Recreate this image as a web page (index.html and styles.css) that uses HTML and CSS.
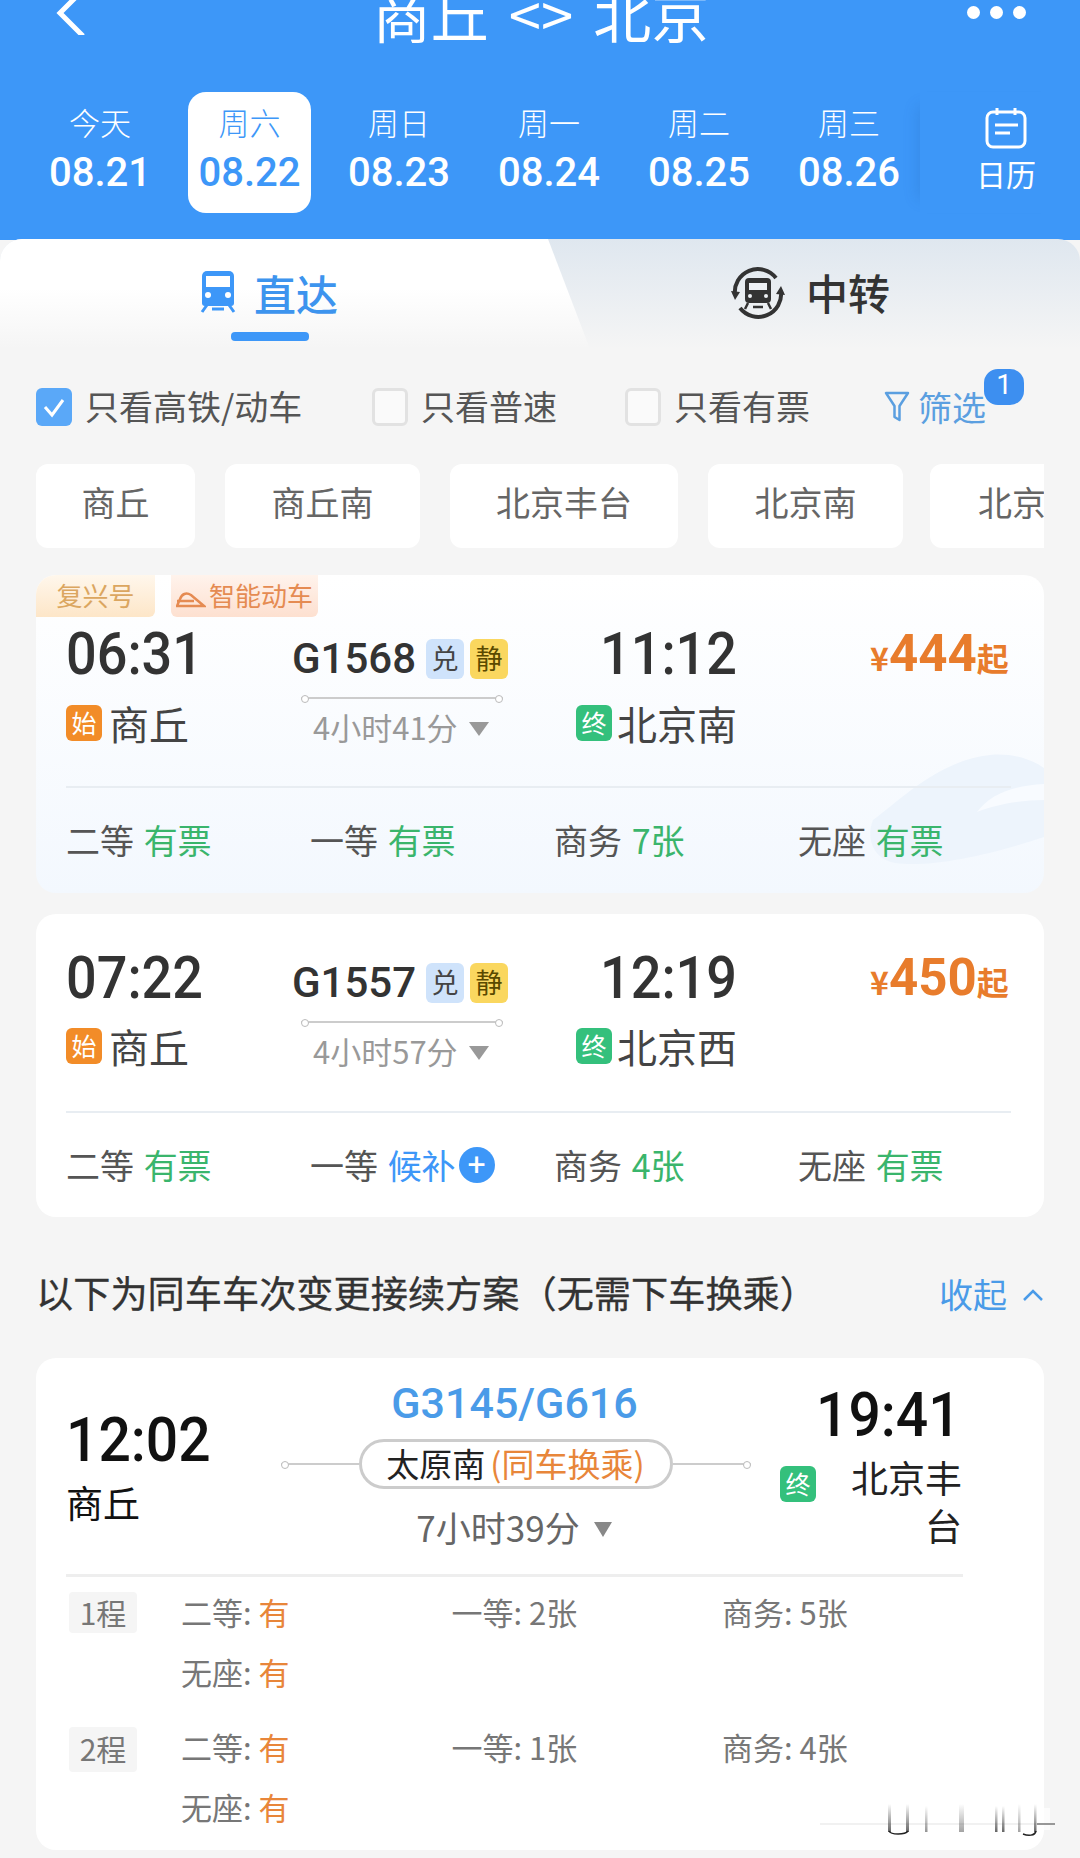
FILE: index.html
```html
<!DOCTYPE html>
<html lang="zh">
<head>
<meta charset="utf-8">
<title>商丘 北京</title>
<link rel="stylesheet" href="styles.css">
</head>
<body>
<header class="head">
  <div class="nav">
    <svg class="back" viewBox="0 0 40 35"><path d="M25-2 10 13l23 23" fill="none" stroke="#fff" stroke-width="5"/></svg>
    <div class="route">商丘 &lt;&gt; 北京</div>
    <div class="more"><i></i><i></i><i></i></div>
  </div>
  <div class="dates">
    <div class="date"><span class="d1">今天</span><span class="d2">08.21</span></div>
    <div class="date on"><span class="d1">周六</span><span class="d2">08.22</span></div>
    <div class="date"><span class="d1">周日</span><span class="d2">08.23</span></div>
    <div class="date"><span class="d1">周一</span><span class="d2">08.24</span></div>
    <div class="date"><span class="d1">周二</span><span class="d2">08.25</span></div>
    <div class="date"><span class="d1">周三</span><span class="d2">08.26</span></div>
    <div class="cal">
      <svg class="cal-i" viewBox="0 0 42 42"><rect x="2" y="5" width="38" height="35" rx="6" fill="none" stroke="#fff" stroke-width="3"/><path d="M12 1v7M30 1v7" stroke="#fff" stroke-width="3"/><path d="M10 18h23M10 26h15" stroke="#fff" stroke-width="3"/></svg>
      <span>日历</span>
    </div>
  </div>
</header>
<main class="body">
  <div class="tabs">
    <div class="tab tab-l">
      <svg class="t-ico" viewBox="0 0 36 42"><path d="M7 0h22a5 5 0 0 1 5 5v27a3 3 0 0 1-3 3H5a3 3 0 0 1-3-3V5a5 5 0 0 1 5-5z" fill="#3d97f8"/><rect x="6" y="5" width="24" height="11" fill="#fff"/><circle cx="8" cy="24" r="3" fill="#fff"/><circle cx="28" cy="24" r="3" fill="#fff"/><path d="M7 34 2 41M29 34l5 7M12 38h12" stroke="#3d97f8" stroke-width="3" fill="none"/></svg>
      <span class="tl">直达</span>
      <i class="bar"></i>
    </div>
    <div class="tab tab-r">
      <svg class="t-ico2" viewBox="0 0 56 56"><path d="M5 30A23 23 0 0 1 46 13M51 26A23 23 0 0 1 10 43" fill="none" stroke="#333" stroke-width="4"/><path d="M1 26l9 1-5 8zM55 30l-9-1 5-8z" fill="#333"/><rect x="15" y="13" width="26" height="25" rx="4" fill="#333"/><rect x="19" y="18" width="18" height="7" fill="#eef1f5"/><circle cx="20" cy="31" r="2" fill="#eef1f5"/><circle cx="36" cy="31" r="2" fill="#eef1f5"/><path d="M18 38l-3 6M38 38l3 6M23 42h10" stroke="#333" stroke-width="2.500"/></svg>
      <span class="tr">中转</span>
    </div>
  </div>

  <div class="filters">
    <div class="chk on"><svg viewBox="0 0 35 37"><path d="M9 19l7 8 11-15" fill="none" stroke="#fff" stroke-width="3"/></svg></div>
    <span class="flab w1">只看高铁/动车</span>
    <div class="chk"></div>
    <span class="flab w2">只看普速</span>
    <div class="chk"></div>
    <span class="flab w3">只看有票</span>
    <div class="screen">
      <svg viewBox="0 0 26 32"><path d="M2 3h22L15.500 16v14l-5-3V16z" fill="none" stroke="#5b9fe0" stroke-width="2.500" stroke-linejoin="round"/></svg>
      <span>筛选</span>
      <b class="badge">1</b>
    </div>
  </div>

  <div class="chips">
    <div class="chip c1">商丘</div>
    <div class="chip c2">商丘南</div>
    <div class="chip c3">北京丰台</div>
    <div class="chip c4">北京南</div>
    <div class="chip c5">北京</div>
  </div>

  <section class="card first">
    <svg class="wm" viewBox="0 0 174 120"><path d="M3 70C30 50 70 10 120 5c20-2 40 3 54 13v69c-54 18-114 31-149 26C5 110-5 90 3 70z" fill="#edf4fc"/><path d="M107 62c13-17 33-26 67-28v16c-24 0-49 5-67 12z" fill="#f8fbff"/></svg>
    <div class="tags">
      <span class="tag fx">复兴号</span>
      <span class="tag zn"><svg viewBox="0 0 30 18"><path d="M1 16h27L15 5C10 2 6 4 4 9z M1 11h17" fill="none" stroke="#e58b52" stroke-width="2.500"/></svg>智能动车</span>
    </div>
    <div class="info first-info">
      <div class="time">06:31</div>
      <div class="code"><span class="no">G1568</span><em class="ex">兑</em><em class="qu">静</em></div>
      <div class="time t2">11:12</div>
      <div class="price"><small>¥</small>444<small>起</small></div>
    </div>
    <div class="info2">
      <div class="st"><b class="shi">始</b><span>商丘</span></div>
      <div class="mid"><div class="lin"></div><div class="dur">4小时41分<i class="tri"></i></div></div>
      <div class="st st2"><b class="zhong">终</b><span>北京南</span></div>
    </div>
    <div class="rule"></div>
    <div class="seats">
      <div class="seat">二等 <span class="g">有票</span></div>
      <div class="seat">一等 <span class="g">有票</span></div>
      <div class="seat">商务 <span class="g">7张</span></div>
      <div class="seat">无座 <span class="g">有票</span></div>
    </div>
  </section>

  <section class="card second">
    <div class="info">
      <div class="time">07:22</div>
      <div class="code"><span class="no">G1557</span><em class="ex">兑</em><em class="qu">静</em></div>
      <div class="time t2">12:19</div>
      <div class="price"><small>¥</small>450<small>起</small></div>
    </div>
    <div class="info2">
      <div class="st"><b class="shi">始</b><span>商丘</span></div>
      <div class="mid"><div class="lin"></div><div class="dur">4小时57分<i class="tri"></i></div></div>
      <div class="st st2"><b class="zhong">终</b><span>北京西</span></div>
    </div>
    <div class="rule"></div>
    <div class="seats">
      <div class="seat">二等 <span class="g">有票</span></div>
      <div class="seat">一等 <span class="b">候补</span><b class="plus">+</b></div>
      <div class="seat">商务 <span class="g">4张</span></div>
      <div class="seat">无座 <span class="g">有票</span></div>
    </div>
  </section>

  <div class="sec">
    <h2>以下为同车车次变更接续方案（无需下车换乘）</h2>
    <div class="fold">收起<svg viewBox="0 0 22 14"><path d="M2 12 11 3l9 9" fill="none" stroke="#4a9be8" stroke-width="2.500"/></svg></div>
  </div>

  <section class="card third">
    <div class="plan">
      <div class="p-l"><div class="p-time">12:02</div><div class="p-st">商丘</div></div>
      <div class="p-m">
        <div class="p-no">G3145/G616</div>
        <div class="p-via"><i class="p-line"></i><div class="pill">太原南<span class="o">(同车换乘)</span></div><i class="p-line"></i></div>
        <div class="p-dur">7小时39分<i class="tri"></i></div>
      </div>
      <div class="p-r">
        <div class="p-time">19:41</div>
        <div class="p-end"><b class="zhong">终</b><span>北京丰台</span></div>
      </div>
    </div>
    <div class="p-rule"></div>
    <div class="leg">
      <span class="lt">1程</span>
      <div class="grid">
        <div>二等: <span class="o">有</span></div><div>一等: 2张</div><div>商务: 5张</div>
        <div>无座: <span class="o">有</span></div>
      </div>
    </div>
    <div class="leg leg2">
      <span class="lt">2程</span>
      <div class="grid">
        <div>二等: <span class="o">有</span></div><div>一等: 1张</div><div>商务: 4张</div>
        <div>无座: <span class="o">有</span></div>
      </div>
    </div>
  </section>
</main>
<svg class="smear" viewBox="0 0 245 50">
  <defs><linearGradient id="fade" x1="0" y1="0" x2="0" y2="1"><stop offset="0" stop-color="#333" stop-opacity="0"/><stop offset="1" stop-color="#333" stop-opacity=".75"/></linearGradient></defs>
  <rect x="5" y="8" width="230" height="22" fill="#fff" opacity=".7"/>
  <path d="M5 24h220" stroke="#ddd" stroke-width="1.500" opacity=".5"/>
  <path d="M222 24h18" stroke="#777" stroke-width="1.500"/>
  <rect x="73" y="4" width="3" height="28" fill="url(#fade)"/><rect x="91" y="4" width="3" height="28" fill="url(#fade)"/>
  <path d="M74 31c2 4 16 4 19 0" fill="none" stroke="#222" stroke-width="1.500"/>
  <rect x="110" y="6" width="2.500" height="26" fill="url(#fade)" opacity=".7"/>
  <rect x="144" y="4" width="5" height="28" fill="url(#fade)" opacity=".6"/>
  <rect x="180" y="6" width="2.500" height="26" fill="url(#fade)"/><rect x="187" y="6" width="2.500" height="26" fill="url(#fade)"/>
  <rect x="203" y="4" width="2.500" height="28" fill="url(#fade)" opacity=".6"/><rect x="219" y="4" width="2.500" height="28" fill="url(#fade)"/>
  <path d="M208 34c5 2 12 2 13-3" fill="none" stroke="#222" stroke-width="1.500"/>
</svg>
</body>
</html>
```
FILE: styles.css
```css
* { box-sizing: border-box; }
html, body { margin: 0; padding: 0; }
body {
  width: 1080px; height: 1858px; overflow: hidden; background: #f5f5f5; position: relative;
  font-family: "Noto Sans CJK SC", Roboto, sans-serif; color: #444;
}
i, em { font-style: normal; }
.head { height: 240px; background: #3d97f8; color: #fff; overflow: hidden; }
.nav { height: 92px; position: relative; display: flex; justify-content: center; align-items: flex-start; }
.back { position: absolute; left: 50px; top: 0; width: 40px; height: 35px; }
.route { font-size: 58px; line-height: 60px; margin-top: -17px; margin-left: 2px; word-spacing: 7px; white-space: nowrap; }
.more { position: absolute; left: 967px; top: 6px; display: flex; gap: 10px; }
.more i { width: 13px; height: 13px; border-radius: 50%; background: #fff; }
.dates { display: flex; padding-left: 25px; height: 121px; position: relative; }
.date { flex: none; width: 150px; display: flex; flex-direction: column; align-items: center; padding-top: 9px; }
.date.on { background: #fff; color: #3d97f8; border-radius: 18px; width: 123px; margin: 0 13px; }
.d1 { font-size: 31px; line-height: 42px; font-weight: 300; }
.d2 { font-family: Roboto, sans-serif; font-size: 40px; line-height: 48px; font-weight: 500; margin-top: 6px; }
.cal { flex: none; width: 160px; margin-left: -4px; padding: 15px 0 0 12px; display: flex; flex-direction: column; align-items: center; box-shadow: -16px 0 14px -14px rgba(30,90,170,.2); }
.cal-i { width: 42px; height: 42px; }
.cal span { font-size: 30px; line-height: 40px; margin-top: 4px; }

.tabs { height: 110px; margin-top: -1px; display: flex; position: relative; background: linear-gradient(#dfe7ef, #f5f5f5); border-radius: 22px 22px 0 0; overflow: hidden; }
.tab { position: relative; display: flex; align-items: flex-start; }
.tab-l { width: 590px; height: 110px; background: linear-gradient(#fff 45%, #f5f5f5); clip-path: polygon(0 0, 548px 0, 590px 100%, 0 100%); padding: 31px 0 0 200px; }
.tab-r { flex: 1; padding: 26px 0 0 140px; }
.t-ico { width: 36px; height: 42px; margin-top: 1px; }
.tl { font-size: 42px; line-height: 46px; color: #3d94ee; margin-left: 18px; font-weight: 500; }
.tr { font-size: 42px; line-height: 46px; color: #333; margin-left: 20px; margin-top: 4px; font-weight: 500; }
.t-ico2 { width: 56px; height: 56px; }
.bar { position: absolute; left: 231px; top: 93px; width: 78px; height: 9px; border-radius: 4px; background: #3d97f8; }

.filters { display: flex; align-items: center; height: 64px; margin-top: 25px; padding-left: 36px; position: relative; }
.chk { width: 36px; height: 38px; border-radius: 6px; border: 3px solid #e2e2e2; background: #fafafa; flex: none; margin-top: 2px; }
.chk.on { background: #5aa8f8; border: 0; }
.chk svg { display: block; width: 35px; height: 37px; }
.flab { font-size: 34px; color: #555; margin-left: 13px; line-height: 40px; white-space: nowrap; }
.w1 { width: 287px; }
.w2 { width: 204px; }
.w3 { width: 210px; }
.screen { display: flex; align-items: center; color: #5b9fe0; font-size: 34px; position: relative; }
.screen svg { width: 26px; height: 32px; margin-right: 8px; }
.badge { position: absolute; left: 100px; top: -13px; width: 40px; height: 36px; border-radius: 14px; background: #3d8ff0; color: #fff; font: 400 28px/32px Roboto, sans-serif; text-align: center; }

.chips { display: flex; margin: 26px 36px 0; width: 1008px; gap: 30px; overflow: hidden; height: 84px; }
.chip { flex: none; height: 84px; background: #fff; border-radius: 12px; font-size: 34px; line-height: 76px; text-align: center; color: #666; }
.c1 { width: 159px; }
.c2 { width: 195px; }
.c3 { width: 228px; }
.c4 { width: 195px; }
.c5 { width: 159px; text-align: left; padding-left: 48px; margin-left: -3px; }

.card { margin: 0 36px; width: 1008px; background: #fff; border-radius: 20px; position: relative; overflow: hidden; isolation: isolate; }
.first { margin-top: 27px; height: 318px; background: linear-gradient(#fff, #f3f8fe); }
.second { margin-top: 21px; height: 303px; }
.wm { position: absolute; left: 834px; top: 175px; width: 174px; height: 120px; z-index: -1; }
.tags { display: flex; gap: 16px; height: 42px; position: relative; }
.tag { font-size: 26px; line-height: 34px; border-radius: 0 0 6px 0; display: flex; align-items: center; justify-content: center; padding-bottom: 2px; }
.fx { width: 119px; background: linear-gradient(#fff7ec, #fde6c8); color: #dba660; }
.zn { width: 147px; background: linear-gradient(#fff3ec, #fde0d0); color: #e58b52; border-radius: 0 0 6px 6px; }
.zn svg { width: 30px; height: 18px; margin: 8px 3px 0 0; }

.info { display: flex; align-items: flex-start; padding: 32px 0 0 30px; position: relative; height: 106px; }
.first-info { padding-top: 5px; height: 80px; }
.time { font: 500 54px/64px Roboto, sans-serif; color: #333; width: 226px; transform: scaleY(1.1); }
.code { display: flex; align-items: center; width: 308px; height: 64px; padding-top: 10px; }
.no { font: 500 42px/50px Roboto, sans-serif; color: #333; }
.code em { width: 38px; height: 40px; border-radius: 6px; font-size: 27px; line-height: 38px; text-align: center; color: #444; }
.ex { background: #cfe3fb; margin-left: 10px; }
.qu { background: #fad75f; margin-left: 6px; color: #5a4a00 !important; }
.t2 { width: 270px; }
.price { font: 700 51px/64px Roboto, sans-serif; color: #e87c2c; white-space: nowrap; }
.price small { font-size: 32px; font-family: "Noto Sans CJK SC", sans-serif; }

.info2 { display: flex; padding-left: 30px; position: relative; height: 89px; align-items: flex-start; }
.second .info2 { height: 91px; }
.second .mid { margin-top: 1px; }
.st { width: 235px; display: flex; align-items: center; font-size: 40px; line-height: 50px; color: #444; margin-top: 1px; }
.st span { margin-left: 7px; }
.st2 span { margin-left: 5px; }
.st2 { width: auto; }
.shi, .zhong { flex: none; width: 36px; height: 36px; border-radius: 6px; color: #fff; font-weight: 400; font-size: 25px; line-height: 35px; text-align: center; }
.shi { background: #f28c28; }
.zhong { background: #34c07c; }
.mid { width: 275px; }
.lin { width: 202px; height: 2px; background: #ccc; position: relative; }
.lin::before, .lin::after { content: ""; position: absolute; top: -2px; width: 6px; height: 6px; border: 1px solid #bbb; border-radius: 50%; background: #fff; }
.lin::before { left: 0; }
.lin::after { right: 0; }
.dur { font-size: 31px; line-height: 40px; color: #999; margin: 8px 0 0 12px; display: flex; align-items: center; white-space: nowrap; }
.tri { width: 0; height: 0; border-left: 10px solid transparent; border-right: 10px solid transparent; border-top: 14px solid #999; margin-left: 11px; margin-top: 4px; }
.rule { height: 2px; background: #e8edf2; margin: 0 33px 0 30px; }
.seats { display: flex; padding: 31px 0 0 30px; }
.seat { width: 244px; font-size: 34px; line-height: 42px; color: #555; display: flex; align-items: center; white-space: pre; }
.seat span { margin-left: 2px; }
.g { color: #3ab56c; }
.b { color: #3d97f8; }
.plus { width: 36px; height: 36px; margin-left: 3px; border-radius: 50%; background: #3d97f8; color: #fff; font: 400 32px/34px Roboto, sans-serif; text-align: center; }

.sec { display: flex; justify-content: space-between; align-items: center; height: 141px; padding: 8px 36px 0 36px; }
.sec h2 { margin: 0; font-size: 37.200px; font-weight: 400; color: #333; white-space: nowrap; -webkit-text-stroke: 0.3px #333; }
.fold { color: #4a9be8; font-size: 34px; display: flex; align-items: center; margin-top: 4px; }
.fold svg { width: 22px; height: 14px; margin-left: 15px; margin-top: 2px; }

.third { height: 492px; }
.plan { display: flex; height: 216px; position: relative; }
.p-l { width: 247px; padding: 51px 0 0 30px; color: #111; }
.p-time { font: 500 57px/64px Roboto, sans-serif; color: #111; transform: scaleY(1.06); }
.p-st { font-size: 37px; line-height: 50px; margin-top: 4px; }
.p-m { width: 465px; display: flex; flex-direction: column; align-items: center; }
.p-no { font: 500 43px/50px Roboto, sans-serif; color: #4a9be8; margin-top: 20px; margin-left: -2px; }
.p-via { display: flex; align-items: center; margin-top: 11px; }
.p-line { width: 78px; height: 2px; background: #ccc; position: relative; flex: none; }
.p-via .p-line:first-child::before, .p-via .p-line:last-child::after { content: ""; position: absolute; top: -2px; width: 6px; height: 6px; border: 1px solid #bbb; border-radius: 50%; background: #fff; }
.p-via .p-line:first-child::before { left: 0; }
.p-via .p-line:last-child::after { right: 0; }
.pill { flex: none; width: 314px; height: 50px; border: 3px solid #ccc; border-radius: 25px; font-size: 33px; line-height: 42px; text-align: center; color: #222; white-space: nowrap; }
.pill .o { margin-left: 5px; }
.o { color: #e8863a; }
.p-dur { font-size: 35px; line-height: 44px; color: #666; display: flex; align-items: center; margin-top: 16px; margin-left: -3px; }
.p-dur .tri { border-left-width: 9px; border-right-width: 9px; border-top-width: 15px; border-top-color: #888; margin-left: 14px; }
.p-r { width: 220px; padding-top: 26px; margin-left: 32px; }
.p-r .p-time { padding-left: 36px; }
.p-end { display: flex; align-items: flex-start; margin-top: 5px; font-size: 37px; line-height: 48px; color: #222; }
.p-end .zhong { margin-top: 13px; }
.p-end span { width: 112px; margin-left: 34px; text-align: right; }
.p-rule { height: 3px; background: #eee; margin: 0 81px 0 30px; }
.leg { display: flex; padding: 15px 0 0 33px; height: 133px; }
.leg2 { padding-top: 17px; height: 130px; }
.lt { flex: none; width: 68px; height: 41px; background: #f5f5f5; border-radius: 4px; font-size: 30px; line-height: 40px; text-align: center; color: #777; }
.leg2 .lt { height: 45px; line-height: 42px; }
.grid { display: grid; grid-template-columns: repeat(3, 270.500px); grid-auto-rows: 60px; margin: -3px 0 0 44px; font-size: 31px; line-height: 46px; color: #777; }
.smear { position: absolute; left: 815px; top: 1800px; width: 245px; height: 50px; }
```
